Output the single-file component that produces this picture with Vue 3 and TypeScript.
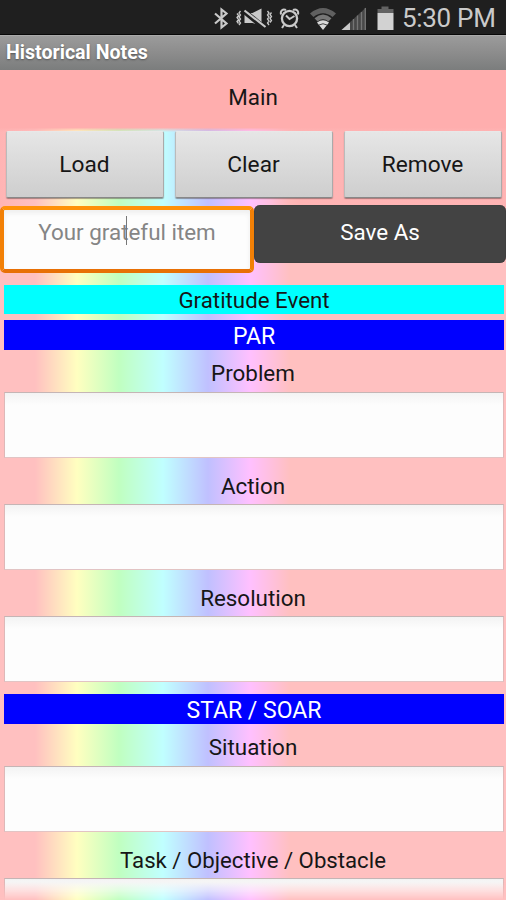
<script setup lang="ts">
import { ref } from 'vue'

interface Section {
  heading?: string
  label: string
}

const actions: string[] = ['Load', 'Clear', 'Remove']
const sections: Section[] = [
  { heading: 'PAR', label: 'Problem' },
  { label: 'Action' },
  { label: 'Resolution' },
  { heading: 'STAR / SOAR', label: 'Situation' },
  { label: 'Task / Objective / Obstacle' },
]
const notes = ref<string[]>(sections.map(() => ''))
</script>

<template>
  <div class="screen">
    <header class="status">
      <svg class="icons" width="196" height="34" viewBox="0 0 196 34" fill="none" stroke="#c9c9c9">
        <path d="M17 13.500 28.500 23.500 23.500 27.500V9.500L28.500 13.500 17 23.500" stroke-width="2.200" />
        <g transform="translate(13.500 0)">
          <path d="M29 11l-1.500 2 1.500 2-1.500 2 1.500 2-1.500 2 1.500 2-1.500 2M25.500 13.500l1.500 2-1.500 2 1.500 2-1.500 2 1.500 2" stroke-width="1.300" />
          <path d="M56 11l1.500 2-1.500 2 1.500 2-1.500 2 1.500 2-1.500 2 1.500 2M60 12.500l-1.500 2 1.500 2-1.500 2 1.500 2-1.500 2" stroke-width="1.300" />
          <path d="M33 13h8L50 8.500v17L41 23h-8z" fill="#c9c9c9" stroke="none" />
          <path d="M33 11.500 53 28" stroke="#1f1f1f" stroke-width="5.500" />
          <path d="M33 10.500 54 27" stroke-width="2.200" />
        </g>
        <g transform="translate(13 0)">
          <circle cx="78.500" cy="18.500" r="7.600" stroke-width="2.300" />
          <path d="M75 15.500l3.500 3.500 5-3M70 14.500c-1-4 2-6 5-4.500M87 14.500c1-4-2-6-5-4.500M73 25l-2 3M84 25l2 3" stroke-width="2" />
        </g>
        <g transform="translate(13.500 0)">
          <path d="M98.500 13.500Q111.500 2.500 124.500 13.500L121 17Q111.500 9.500 102 17z" fill="#606060" stroke="none" />
          <path d="M103 18.200Q111.500 11 120 18.200L117 21.500Q111.500 17 106 21.500z" fill="#777" stroke="none" />
          <path d="M105.500 22.500Q111.500 18 117.500 22.500L111.500 30z" fill="#dadada" stroke="none" />
          <path d="M107.500 25Q111.500 22.500 115.500 25" stroke="#444" />
        </g>
        <g transform="translate(13 0)">
          <path d="M130.500 30 155 7.500V30z" fill="#484848" stroke="none" />
          <path d="M130.500 30 139 22.500V30z" fill="#c9c9c9" stroke="none" />
          <path d="M142.500 19v11M146.500 15.500V30M150.500 12v18M154.300 8v22" stroke="#757575" stroke-width="1.300" />
        </g>
        <path d="M179.500 9h16v4h-16zM183.500 6.500h7v3h-7z" fill="#626262" stroke="none" />
        <path d="M179.500 13h16v17h-16z" fill="#d2d2d2" stroke="none" />
      </svg>
      <span class="clock">5:30 PM</span>
    </header>
    <div class="titlebar">Historical Notes</div>
    <div class="main-label">Main</div>

    <main class="content">
      <div class="actions">
        <button v-for="name in actions" :key="name" class="action">{{ name }}</button>
      </div>
      <div class="save-row">
        <div class="item-field">
          <span class="hint">Your grateful item</span>
          <i class="caret"></i>
        </div>
        <button class="save">Save As</button>
      </div>
      <h2 class="band event">Gratitude Event</h2>
      <section v-for="(s, i) in sections" :key="s.label" class="section">
        <h2 v-if="s.heading" class="band group">{{ s.heading }}</h2>
        <label class="label" :class="{ tall: !s.heading }">
          <span>{{ s.label }}</span>
        </label>
        <textarea v-model="notes[i]" class="note"></textarea>
      </section>
      <div class="fade"></div>
    </main>
  </div>
</template>

<style>
body {
  margin: 0;
  overflow: hidden;
}
</style>

<style scoped>
.screen {
  width: 506px;
  height: 900px;
  overflow: hidden;
  box-sizing: border-box;
  display: flex;
  flex-direction: column;
  font-family: Roboto, sans-serif;
  font-size: 22.4px;
  color: #161616;
}
.status {
  flex: 0 0 35px;
  box-sizing: border-box;
  display: flex;
  align-items: flex-start;
  justify-content: flex-end;
  padding-right: 12px;
  background: #1f1f1f;
  border-bottom: 1px solid #080808;
}
.icons {
  flex: none;
  margin-right: 8px;
}
.clock {
  width: 92px;
  height: 34px;
  white-space: nowrap;
  font-size: 26px;
  line-height: 37px;
  letter-spacing: -0.3px;
  color: #cacaca;
}
.titlebar {
  flex: 0 0 35px;
  height: 35px;
  min-height: 0;
  box-sizing: border-box;
  padding-left: 6px;
  line-height: 34px;
  font-size: 19.600px;
  font-weight: 700;
  color: #fff;
  text-shadow: 0 1px 2px #555;
  background: linear-gradient(#9b9b9b, #8c8c8c 50%, #7b7d7d);
  border-top: 1px solid #aaa;
}
.main-label {
  flex: 0 0 58px;
  line-height: 55px;
  text-align: center;
  background: #ffaeae;
}
.content {
  position: relative;
  flex: 1;
  min-height: 0;
  overflow: hidden;
  padding-top: 3px;
  box-sizing: border-box;
  background:
    linear-gradient(rgba(255, 174, 174, 0.9), rgba(255, 174, 174, 0) 4px),
    linear-gradient(90deg, rgba(255, 165, 165, 0.45), rgba(255, 165, 165, 0) 35px, rgba(255, 165, 165, 0) 270px, rgba(255, 165, 165, 0.45) 300px) 0 0 / 100% 100px no-repeat,
    linear-gradient(90deg, #ffc0c0 35px, #ffffc0 77px, #c0ffc0 119px, #c0ffff 163px, #c0c0ff 208px, #ffc0ff 250px, #ffc0c0 290px);
}
.actions {
  display: grid;
  grid-template-columns: repeat(3, 158px);
  gap: 11px;
  padding-left: 5.500px;
}
.action {
  height: 67px;
  padding: 0;
  font: inherit;
  font-size: 22.700px;
  color: #161616;
  border: 1px solid;
  border-color: #e8e8e8 #aaa #888 #bbb;
  border-radius: 2px;
  background: linear-gradient(#e6e6e6, #cecece);
  box-shadow: 0 1px 1px rgba(80, 60, 60, 0.5);
}
.save-row {
  display: flex;
  align-items: flex-start;
  margin-top: 7px;
  height: 80px;
}
.item-field {
  position: relative;
  box-sizing: border-box;
  width: 254px;
  height: 67px;
  margin-top: 1px;
  padding-top: 5px;
  border: 4px solid;
  border-color: #ff9209 #f28006 #e87005 #f28006;
  border-radius: 5px;
  background: #fdfdfd;
  box-shadow: inset 0 3px 5px #eee;
  text-align: center;
  line-height: 35px;
  color: #858585;
}
.caret {
  position: absolute;
  left: 122px;
  top: 6px;
  width: 1px;
  height: 29px;
  background: #777;
}
.save {
  width: 252px;
  height: 58px;
  padding: 0 0 4px;
  border: 0;
  border-radius: 6px;
  font: inherit;
  color: #fff;
  background: #434343;
  box-shadow: inset 0 0 1px #222;
}
.band {
  margin: 0 2px 0 4px;
  height: 30px;
  line-height: 31px;
  font-size: 22.300px;
  font-weight: 400;
  text-align: center;
}
.event {
  height: 29px;
  margin-bottom: 6px;
  background: #0ff;
}
.group {
  height: 30px;
  line-height: 33px;
  font-size: 23px;
  color: #fff;
  background: #00f;
}
.section:nth-of-type(4) .group {
  margin-top: 12px;
}
.section {
  display: flex;
  flex-direction: column;
}
.label {
  height: 42px;
  line-height: 47px;
  text-align: center;
}
.label.tall {
  height: 46px;
  line-height: 57px;
}
.section:last-of-type .label {
  font-size: 22.200px;
}
.note {
  display: block;
  height: 66px;
  margin: 0 2px 0 4px;
  box-sizing: border-box;
  resize: none;
  outline: 0;
  border: 1px solid;
  border-color: #c5b5b5 #e0b8b8 #e2c4c4 #deb8b8;
  background: linear-gradient(#f3f3f3, #fdfdfd 12px);
  font: inherit;
}
.fade {
  position: absolute;
  left: 0;
  right: 0;
  bottom: 0;
  height: 18px;
  background: linear-gradient(90deg, #ffc0c0 35px, #ffffc0 77px, #c0ffc0 119px, #c0ffff 163px, #c0c0ff 208px, #ffc0ff 250px, #ffc0c0 290px);
  mask-image: linear-gradient(transparent, #000);
}
</style>
